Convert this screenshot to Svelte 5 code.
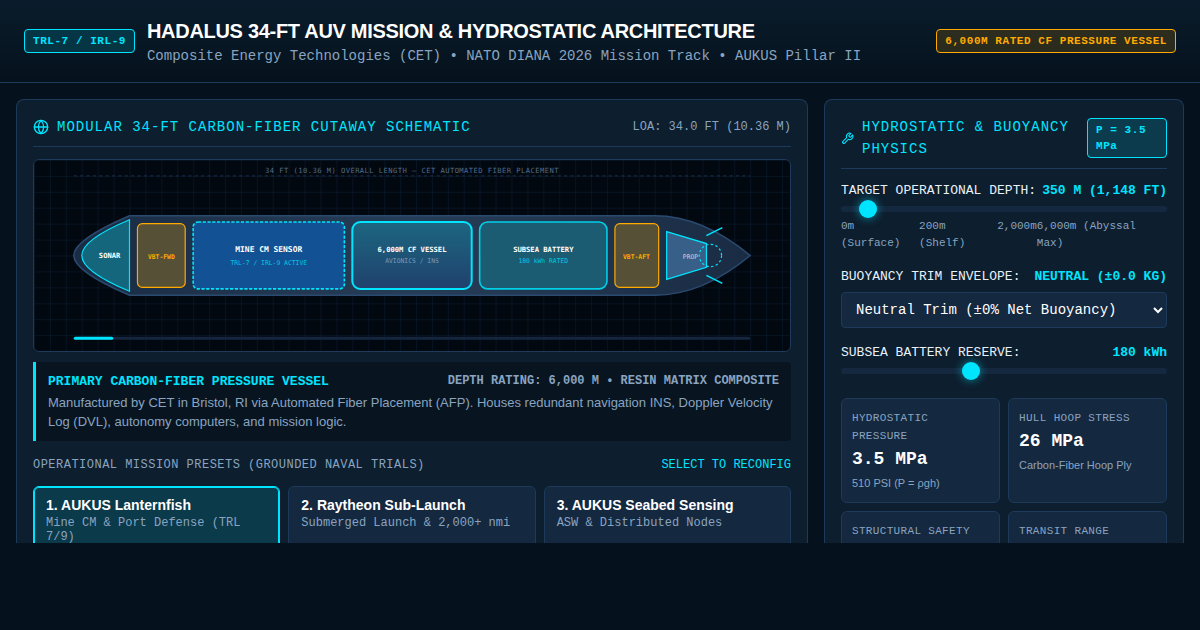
<script lang="ts">
	interface Preset {
		id: string;
		title: string;
		note: string;
	}

	const presets: Preset[] = [
		{ id: "lanternfish", title: "1. AUKUS Lanternfish", note: "Mine CM & Port Defense (TRL 7/9)" },
		{ id: "sublaunch", title: "2. Raytheon Sub-Launch", note: "Submerged Launch & 2,000+ nmi" },
		{ id: "seabed", title: "3. AUKUS Seabed Sensing", note: "ASW & Distributed Nodes" },
	];

	let active = $state("lanternfish");
	let depth = $state(350);
	let battery = $state(180);

	const MAX_DEPTH = 6000;
	const feet = $derived(Math.round(depth * 3.28084).toLocaleString("en-US"));
	const pressure = $derived((depth * 0.01).toFixed(1));
	const psi = $derived(Math.round((depth / 350) * 510));
	const stress = $derived(Math.round((depth / 350) * 26));

	// Depth bar under the hull, in viewBox units
	const barW = $derived((depth / MAX_DEPTH) * 850);
</script>

<div class="page">
	<header class="topbar">
		<div class="brand">
			<span class="badge">TRL-7 / IRL-9</span>
			<div>
				<h1>HADALUS 34-FT AUV MISSION &amp; HYDROSTATIC ARCHITECTURE</h1>
				<p class="tagline">Composite Energy Technologies (CET) • NATO DIANA 2026 Mission Track • AUKUS Pillar II</p>
			</div>
		</div>
		<span class="badge amber">6,000M RATED CF PRESSURE VESSEL</span>
	</header>

	<main class="layout">
		<section class="panel">
			<div class="panel-head">
				<h2>
					<svg class="icon" viewBox="0 0 24 24" aria-hidden="true">
						<circle cx="12" cy="12" r="10" />
						<path d="M2 12h20" />
						<path d="M12 2a15.3 15.3 0 0 1 4 10 15.3 15.3 0 0 1-4 10 15.3 15.3 0 0 1-4-10 15.3 15.3 0 0 1 4-10z" />
					</svg>
					MODULAR 34-FT CARBON-FIBER CUTAWAY SCHEMATIC
				</h2>
				<span class="meta">LOA: 34.0 FT (10.36 M)</span>
			</div>

			<div class="schematic">
				<svg viewBox="0 0 950 240" role="img" aria-label="Vehicle cutaway">
					<defs>
						<pattern id="grid" width="20" height="20" patternUnits="userSpaceOnUse">
							<path d="M20 0H0V20" fill="none" stroke="#0f2238" stroke-width="1" />
						</pattern>
						<linearGradient id="hull" x1="0" y1="0" x2="1" y2="0">
							<stop offset="0" stop-color="#1a2c44" />
							<stop offset="0.5" stop-color="#263d57" />
							<stop offset="1" stop-color="#1a2c44" />
						</linearGradient>
						<linearGradient id="vessel" x1="0" y1="0" x2="0" y2="1">
							<stop offset="0" stop-color="#1c6680" />
							<stop offset="1" stop-color="#20416d" />
						</linearGradient>
					</defs>
					<rect width="950" height="240" fill="url(#grid)" />

					<line x1="50" y1="20" x2="900" y2="20" stroke="#1e3a5f" stroke-dasharray="4 4" />
					<text x="475" y="16" class="dimension">34 FT (10.36 M) OVERALL LENGTH — CET AUTOMATED FIBER PLACEMENT</text>

					<!-- Hull -->
					<path
						d="M50 120Q50 100 120 70H780Q840 70 900 120Q840 170 780 170H120Q50 140 50 120Z"
						fill="url(#hull)" stroke="#2a4a6f" stroke-width="2"
					/>

					<!-- Modules, bow to stern -->
					<path d="M120 75Q60 100 60 120Q60 140 120 165Z" fill="#13667c" stroke="#00e5ff" stroke-width="1.5" />
					<text x="95" y="123" class="name">SONAR</text>

					<rect x="130" y="80" width="60" height="80" rx="6" fill="#565037" stroke="#ffaa00" stroke-width="1.5" />
					<text x="160" y="124" class="sub amber-text">VBT-FWD</text>

					<rect x="200" y="78" width="190" height="84" rx="6" fill="#125193" stroke="#00e5ff" stroke-width="2" stroke-dasharray="4 2" />
					<text x="295" y="115" class="name big">MINE CM SENSOR</text>
					<text x="295" y="132" class="sub cyan-text">TRL-7 / IRL-9 ACTIVE</text>

					<rect x="400" y="78" width="150" height="84" rx="10" fill="url(#vessel)" stroke="#00e5ff" stroke-width="2.5" />
					<text x="475" y="115" class="name">6,000M CF VESSEL</text>
					<text x="475" y="129" class="sub">AVIONICS / INS</text>

					<rect x="560" y="78" width="160" height="84" rx="10" fill="#1b5c72" stroke="#00cfe8" stroke-width="2" />
					<text x="640" y="115" class="name">SUBSEA BATTERY</text>
					<text x="640" y="129" class="sub cyan-text">{battery} kWh RATED</text>

					<rect x="730" y="80" width="55" height="80" rx="6" fill="#565037" stroke="#ffaa00" stroke-width="1.5" />
					<text x="757" y="124" class="sub amber-text">VBT-AFT</text>

					<path d="M795 90L845 105V135L795 150Z" fill="#385f88" stroke="#00e5ff" stroke-width="1.5" />
					<text x="825" y="124" class="sub light-text">PROP</text>
					<circle cx="850" cy="120" r="14" fill="none" stroke="#00e5ff" stroke-width="1.5" stroke-dasharray="3 3" />
					<path d="M845 95L865 85M845 145L865 155" stroke="#00e5ff" stroke-width="2" />

					<!-- Depth bar -->
					<rect x="50" y="222" width="850" height="4" rx="2" fill="#14263f" />
					<rect x="50" y="222" width={barW} height="4" rx="2" fill="#00e5ff" />
				</svg>
			</div>

			<div class="detail">
				<div class="detail-head">
					<h3>PRIMARY CARBON-FIBER PRESSURE VESSEL</h3>
					<strong>DEPTH RATING: 6,000 M • RESIN MATRIX COMPOSITE</strong>
				</div>
				<p>
					Manufactured by CET in Bristol, RI via Automated Fiber Placement (AFP). Houses redundant
					navigation INS, Doppler Velocity Log (DVL), autonomy computers, and mission logic.
				</p>
			</div>

			<div class="presets-head">
				<span class="spaced">OPERATIONAL MISSION PRESETS (GROUNDED NAVAL TRIALS)</span>
				<span class="accent">SELECT TO RECONFIG</span>
			</div>
			<div class="presets">
				{#each presets as p (p.id)}
					<button type="button" class="preset" class:active={active === p.id} onclick={() => (active = p.id)}>
						<span class="preset-title">{p.title}</span>
						<span class="preset-note">{p.note}</span>
					</button>
				{/each}
			</div>
		</section>

		<section class="panel">
			<div class="panel-head">
				<h2>
					<svg class="icon small" viewBox="0 0 24 24" aria-hidden="true">
						<path d="M14.7 6.3a1 1 0 0 0 0 1.4l1.6 1.6a1 1 0 0 0 1.4 0l3.77-3.77a6 6 0 0 1-7.94 7.94l-6.91 6.91a2.12 2.12 0 0 1-3-3l6.91-6.91a6 6 0 0 1 7.94-7.94l-3.76 3.76z" />
					</svg>
					HYDROSTATIC &amp; BUOYANCY PHYSICS
				</h2>
				<span class="badge narrow">P = {pressure} MPa</span>
			</div>

			<div class="field">
				<div class="field-head">
					<label for="depth">TARGET OPERATIONAL DEPTH:</label>
					<output for="depth">{depth} M ({feet} FT)</output>
				</div>
				<input id="depth" type="range" min="0" max={MAX_DEPTH} step="50" bind:value={depth} />
				<div class="ticks">
					<span>0m (Surface)</span>
					<span>200m (Shelf)</span>
					<span>2,000m</span>
					<span>6,000m (Abyssal Max)</span>
				</div>
			</div>

			<div class="field">
				<div class="field-head">
					<label for="trim">BUOYANCY TRIM ENVELOPE:</label>
					<output for="trim">NEUTRAL (±0.0 KG)</output>
				</div>
				<select id="trim">
					<option>Neutral Trim (±0% Net Buoyancy)</option>
				</select>
			</div>

			<div class="field">
				<div class="field-head">
					<label for="battery">SUBSEA BATTERY RESERVE:</label>
					<output for="battery">{battery} kWh</output>
				</div>
				<input id="battery" type="range" min="70" max="350" step="10" bind:value={battery} />
			</div>

			<div class="stats">
				<div class="stat">
					<div class="stat-label">HYDROSTATIC PRESSURE</div>
					<div class="stat-value">{pressure} MPa</div>
					<div class="stat-note">{psi} PSI (P = ρgh)</div>
				</div>
				<div class="stat">
					<div class="stat-label">HULL HOOP STRESS</div>
					<div class="stat-value">{stress} MPa</div>
					<div class="stat-note">Carbon-Fiber Hoop Ply</div>
				</div>
				<div class="stat">
					<div class="stat-label">STRUCTURAL SAFETY</div>
				</div>
				<div class="stat">
					<div class="stat-label">TRANSIT RANGE</div>
				</div>
			</div>
		</section>
	</main>
</div>

<style>
	:global(body) {
		margin: 0;
		background: #05121d;
	}
	.page {
		--panel: #0d1e2e;
		--card: #14283f;
		--border: #1e3a5a;
		--cyan: #00e5ff;
		--amber: #ffaa00;
		--muted: #8aa4c0;
		--mono: "Liberation Mono", "Courier New", monospace;
		display: flex;
		flex-direction: column;
		box-sizing: border-box;
		height: 100vh;
		padding-bottom: 87px;
		color: #e8f1fa;
		font-family: "Liberation Sans", Arial, sans-serif;
		line-height: 1.5;
	}
	.page * {
		box-sizing: border-box;
	}
	h1,
	h2,
	h3,
	p {
		margin: 0;
	}

	.topbar {
		display: flex;
		justify-content: space-between;
		align-items: center;
		padding: 16px 24px;
		border-bottom: 1px solid var(--border);
		background: linear-gradient(180deg, #0a1c2b, #05121d);
	}
	.brand {
		display: flex;
		align-items: center;
		gap: 12px;
	}
	h1 {
		color: #fff;
		font-size: 20px;
		line-height: 30px;
		letter-spacing: -0.015em;
	}
	.tagline {
		color: var(--muted);
		font-family: var(--mono);
		font-size: 14px;
		line-height: 20px;
	}
	.badge {
		padding: 3px 8px;
		border: 1px solid var(--cyan);
		border-radius: 4px;
		background: rgba(0, 229, 255, 0.15);
		color: var(--cyan);
		font: bold 11px/16px var(--mono);
		letter-spacing: 0.05em;
	}
	.badge.amber {
		border-color: var(--amber);
		background: rgba(255, 170, 0, 0.15);
		color: var(--amber);
	}
	.badge.narrow {
		flex: 0 0 80px;
	}

	.layout {
		display: grid;
		grid-template-columns: minmax(0, 1fr) 360px;
		gap: 16px;
		flex: 1;
		min-height: 0;
		padding: 16px 16px 0;
		overflow: hidden;
	}
	.panel {
		min-height: 0;
		padding: 16px;
		border: 1px solid var(--border);
		border-bottom: 0;
		border-radius: 8px 8px 0 0;
		background: var(--panel);
		overflow: hidden;
	}
	.panel-head {
		display: flex;
		justify-content: space-between;
		align-items: center;
		gap: 8px;
		margin-bottom: 12px;
		padding-bottom: 8px;
		border-bottom: 1px solid var(--border);
	}
	h2 {
		display: flex;
		align-items: center;
		gap: 8px;
		color: var(--cyan);
		font: 14px/22px var(--mono);
		letter-spacing: 1px;
	}
	.icon {
		flex: none;
		width: 16px;
		height: 16px;
		fill: none;
		stroke: currentColor;
		stroke-width: 2;
		stroke-linecap: round;
		stroke-linejoin: round;
	}
	.icon.small {
		width: 13px;
		height: 13px;
	}
	.meta {
		color: var(--muted);
		font: 12px/20px var(--mono);
	}

	.schematic {
		border: 1px solid var(--border);
		border-radius: 6px;
		background: #020810;
		overflow: hidden;
	}
	.schematic svg {
		display: block;
		width: 100%;
		height: auto;
	}
	.schematic text {
		font-family: "DejaVu Sans Mono", monospace;
		text-anchor: middle;
	}
	.dimension {
		font-size: 9px;
		letter-spacing: 0.06em;
		fill: #526b88;
	}
	.name {
		font-size: 9px;
		font-weight: bold;
		fill: #fff;
	}
	.name.big {
		font-size: 10px;
	}
	.sub {
		font-size: 8px;
		fill: #7c9ab8;
	}
	.cyan-text {
		fill: #00c8e4;
	}
	.amber-text {
		font-weight: bold;
		fill: var(--amber);
	}
	.light-text {
		fill: #c3d3e4;
	}

	.detail {
		margin-top: 10px;
		padding: 10px 12px;
		border-left: 3px solid var(--cyan);
		border-radius: 0 4px 4px 0;
		background: #081520;
		color: var(--muted);
		font-size: 13px;
		line-height: 19px;
	}
	.detail-head {
		display: flex;
		justify-content: space-between;
		margin-bottom: 1px;
		font-family: var(--mono);
	}
	h3 {
		color: var(--cyan);
		font-size: 13px;
		line-height: 20px;
	}
	.detail-head strong {
		font-size: 12px;
		line-height: 18px;
	}
	.presets-head {
		display: flex;
		justify-content: space-between;
		margin: 15px 0 12px;
		color: var(--muted);
		font: 12px/18px var(--mono);
	}
	.spaced {
		letter-spacing: 0.04em;
	}
	.accent {
		color: var(--cyan);
	}
	.presets {
		display: grid;
		grid-template-columns: repeat(3, minmax(0, 1fr));
		gap: 8px;
	}
	.preset {
		display: flex;
		flex-direction: column;
		gap: 3px;
		min-height: 72px;
		padding: 10px 12px;
		border: 1px solid var(--border);
		border-radius: 6px;
		background: var(--card);
		text-align: left;
		cursor: pointer;
	}
	.preset.active {
		border-color: var(--cyan);
		background: #0b3a4b;
		box-shadow: inset 0 0 0 1px var(--cyan);
	}
	.preset-title {
		color: #fff;
		font: bold 14px/16px "Liberation Sans", Arial, sans-serif;
	}
	.preset-note {
		color: var(--muted);
		font: 12px/14px var(--mono);
	}

	.field {
		margin-bottom: 15px;
		font-family: var(--mono);
		font-size: 13px;
		line-height: 20px;
	}
	.field-head {
		display: flex;
		justify-content: space-between;
		margin-bottom: 5px;
		white-space: nowrap;
	}
	.field-head output {
		color: var(--cyan);
		font-weight: bold;
	}
	input[type="range"] {
		display: block;
		width: 100%;
		height: 6px;
		margin: 0;
		border-radius: 3px;
		background: var(--card);
		appearance: none;
	}
	input[type="range"]::-webkit-slider-thumb {
		width: 18px;
		height: 18px;
		border-radius: 50%;
		background: var(--cyan);
		box-shadow: 0 0 10px rgba(0, 229, 255, 0.6);
		appearance: none;
	}
	.ticks {
		display: flex;
		justify-content: space-between;
		margin-top: 6px;
		color: var(--muted);
		font-size: 11px;
		line-height: 17px;
	}
	select {
		display: block;
		width: 100%;
		padding: 8px 10px;
		border: 1px solid var(--border);
		border-radius: 4px;
		background: var(--card);
		color: #fff;
		font: 14px var(--mono);
	}

	.stats {
		display: grid;
		grid-template-columns: repeat(2, minmax(0, 1fr));
		gap: 8px;
		margin-top: 24px;
	}
	.stat {
		min-height: 105px;
		padding: 10px;
		border: 1px solid var(--border);
		border-radius: 6px;
		background: var(--card);
	}
	.stat-label {
		color: var(--muted);
		font: 11px/18px var(--mono);
		letter-spacing: 0.03em;
	}
	.stat-value {
		color: #fff;
		font: bold 18px/28px var(--mono);
	}
	.stat-note {
		margin-top: 1px;
		color: var(--muted);
		font-size: 11px;
		line-height: 18px;
	}
</style>
